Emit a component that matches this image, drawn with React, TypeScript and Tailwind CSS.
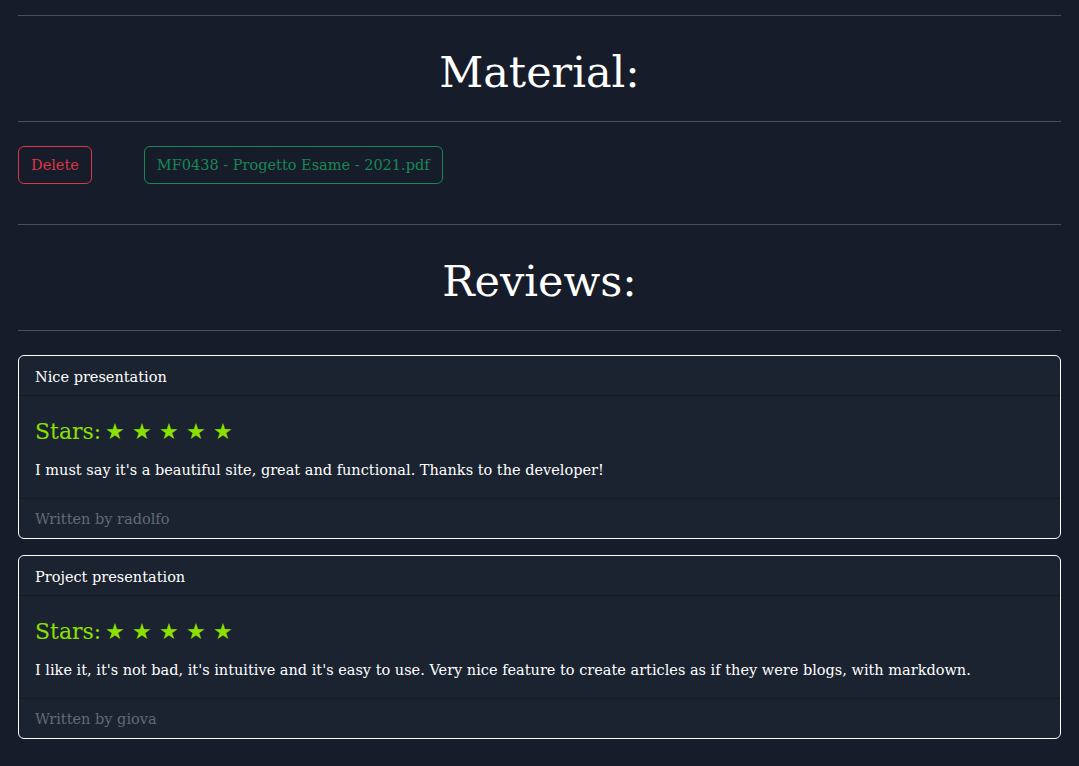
import React from 'react';

const REVIEWS = [
  {
    title: 'Nice presentation',
    stars: 5,
    text: "I must say it's a beautiful site, great and functional. Thanks to the developer!",
    author: 'radolfo',
  },
  {
    title: 'Project presentation',
    stars: 5,
    text: "I like it, it's not bad, it's intuitive and it's easy to use. Very nice feature to create articles as if they were blogs, with markdown.",
    author: 'giova',
  },
];

const Rule = () => <div className="h-px bg-[#4b4f59]" />;

const SectionTitle = ({ children }: { children: React.ReactNode }) => (
  <div className="h-[105px] flex items-center justify-center pt-[8px]">
    <h1 className="text-[43px] leading-none text-white">{children}</h1>
  </div>
);

const App: React.FC = () => {
  return (
    <div
      className="min-h-screen bg-[#161c29] text-white px-[18px] pt-[15px] pb-8"
      style={{ fontFamily: '"DejaVu Serif", "Liberation Serif", serif' }}
    >
      <Rule />
      <SectionTitle>Material:</SectionTitle>
      <Rule />

      {/* Material buttons */}
      <div className="flex items-center gap-[52px] mt-6">
        <button className="h-[38px] px-3 pt-[2px] border border-[#dc3545] text-[#dc3545] rounded-md text-[14.5px]">
          Delete
        </button>
        <button className="h-[38px] px-3 pt-[2px] border border-[#198754] text-[#198754] rounded-md text-[14.5px]">
          MF0438 - Progetto Esame - 2021.pdf
        </button>
      </div>

      <div className="mt-10">
        <Rule />
      </div>
      <SectionTitle>Reviews:</SectionTitle>
      <Rule />

      {/* Review cards */}
      <div className="mt-6 flex flex-col gap-4">
        {REVIEWS.map((r) => (
          <div key={r.title} className="border border-white rounded-md bg-[#1b2331]">
            <div className="h-10 px-4 pt-1 flex items-center text-[14.5px] border-b border-[#151b26]">
              {r.title}
            </div>
            <div className="px-4 pt-[18px] h-[102px]">
              <div className="flex items-center h-[34px] text-[#8be000]">
                <span className="text-[22px]">Stars:</span>
                <span className="ml-[4px] text-[22px]">
                  {Array.from({ length: r.stars }).map(() => '★').join(' ')}
                </span>
              </div>
              <p className="mt-[10px] text-[14.5px] leading-6">{r.text}</p>
            </div>
            <div className="h-10 px-4 pt-[2px] flex items-center text-[14.5px] text-[#626a76] border-t border-[#151b26]">
              Written by {r.author}
            </div>
          </div>
        ))}
      </div>
    </div>
  );
};

export default App;
